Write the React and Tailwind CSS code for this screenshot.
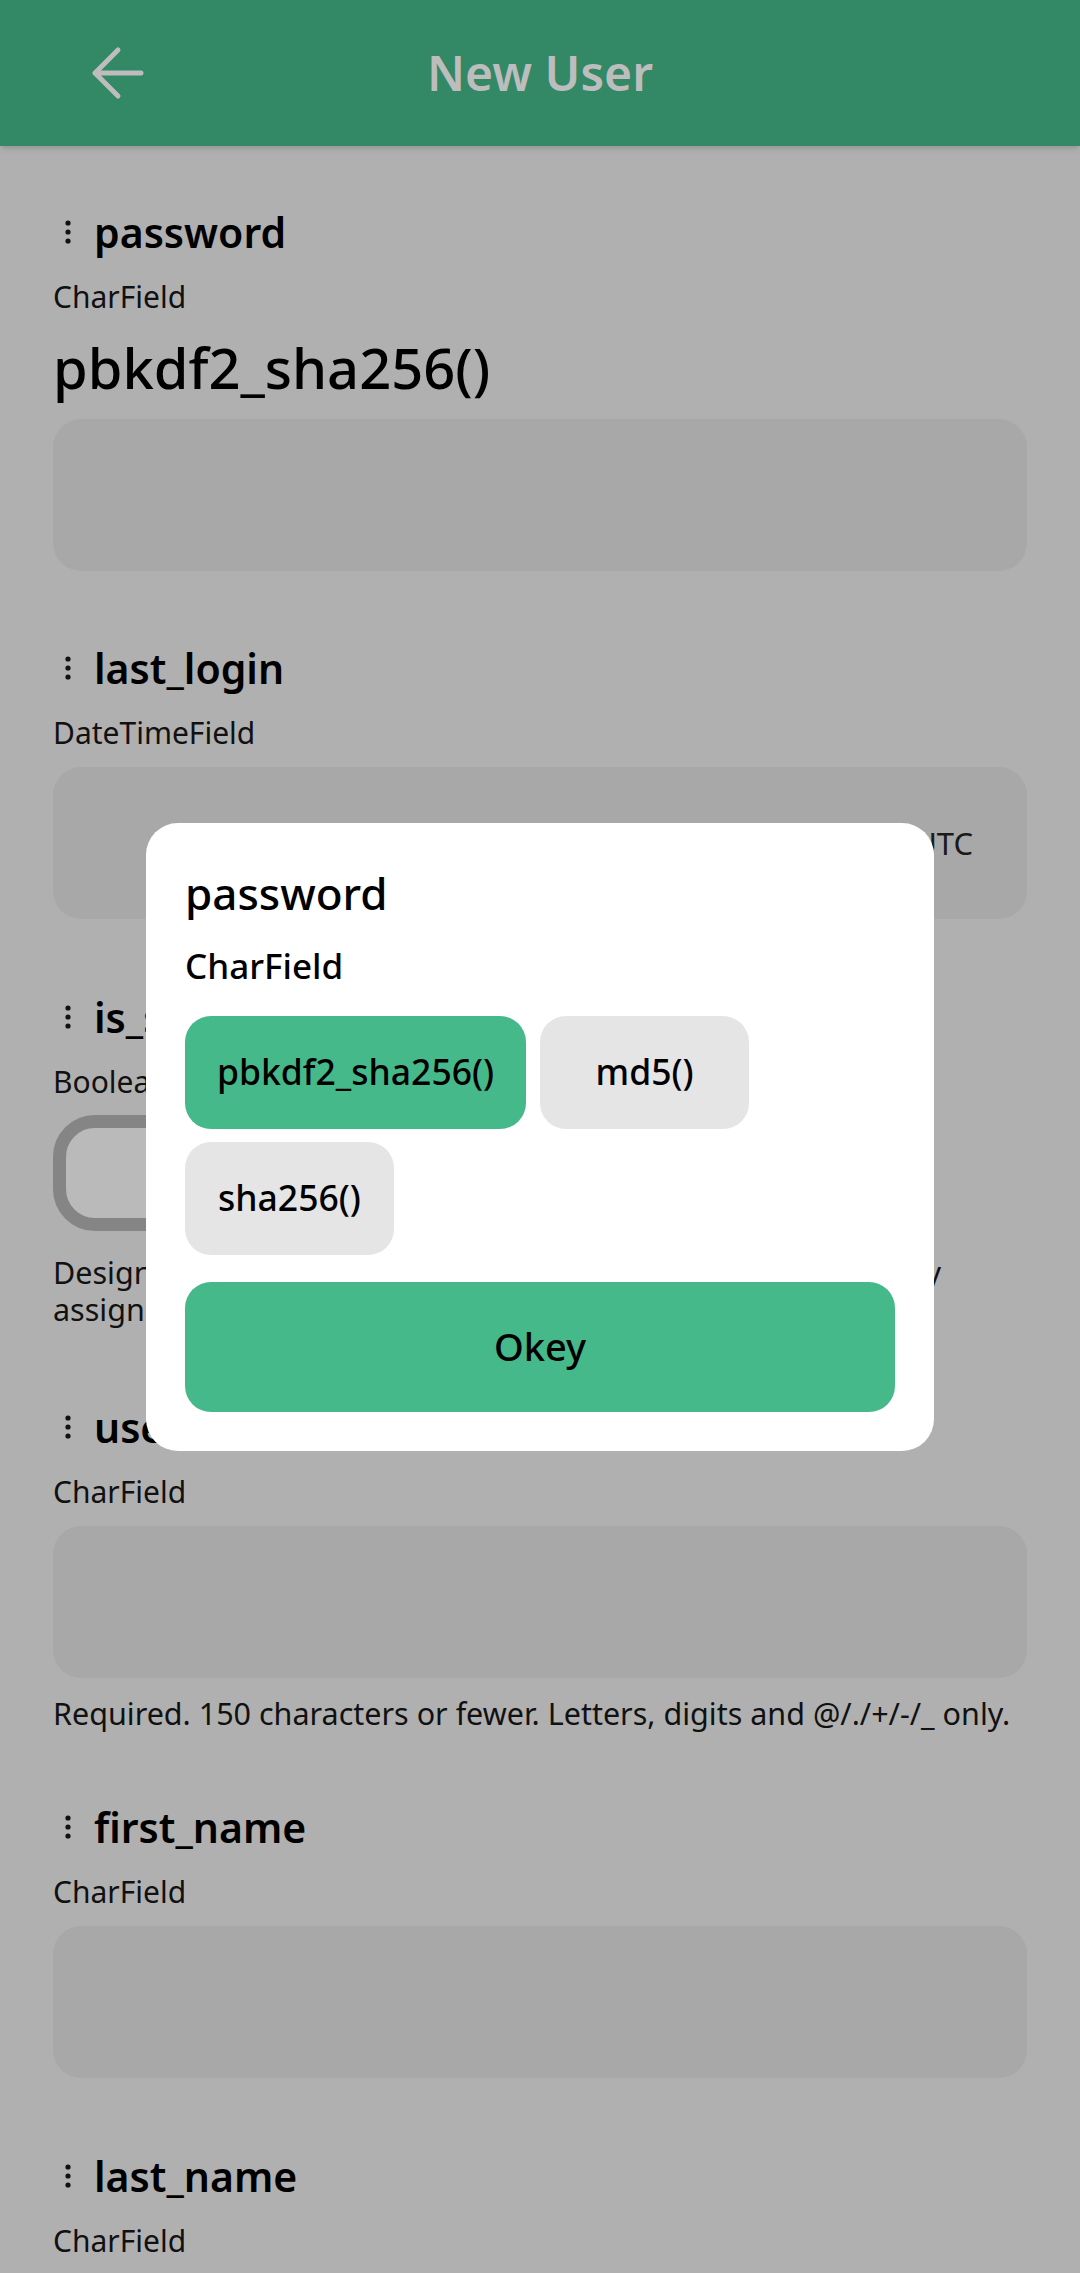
import React from "react";

// Fields shown on the "New User" form
const fields = [
  { name: "password", type: "CharField", value: "pbkdf2_sha256()", kind: "input", mb: "mb-[69px]" },
  { name: "last_login", type: "DateTimeField", kind: "input", inputText: "UTC", mb: "mb-[70px]" },
  {
    name: "is_superuser",
    type: "BooleanField",
    kind: "switch",
    help: ["Designates that this user has all permissions without explicitly", "assigning them."],
    mb: "mb-[71px]",
  },
  {
    name: "username",
    type: "CharField",
    kind: "input",
    help: ["Required. 150 characters or fewer. Letters, digits and @/./+/-/_ only."],
    mb: "mb-[67px]",
  },
  { name: "first_name", type: "CharField", kind: "input", mb: "mb-[70px]" },
  { name: "last_name", type: "CharField", kind: "input", mb: "mb-[70px]" },
];

const hashers = ["pbkdf2_sha256()", "md5()", "sha256()"];

const DragDots = () => (
  <svg width="30" height="24" viewBox="0 0 30 24" className="shrink-0">
    <circle cx="15" cy="3" r="2.6" fill="#111" />
    <circle cx="15" cy="12" r="2.6" fill="#111" />
    <circle cx="15" cy="21" r="2.6" fill="#111" />
  </svg>
);

const Field = ({ field }) => {
  const isSwitch = field.kind === "switch";
  return (
    <section className={field.mb}>
      <div className="flex items-center h-[56px]">
        <DragDots />
        <span className="ml-[11px] text-[41px] leading-[56px] font-semibold text-black">
          {field.name}
        </span>
      </div>
      <div className="mt-[17px] text-[30px] leading-[40px] text-[#111]">{field.type}</div>

      {field.value && (
        <div className="mt-[18px] text-[56px] leading-[64px] font-medium text-black">
          {field.value}
        </div>
      )}

      {field.kind === "input" && (
        <div
          className={`${field.value ? "mt-[20px]" : "mt-[14px]"} h-[152px] rounded-[28px] bg-[#a8a8a8] flex items-center justify-end pr-[54px] text-[31px] text-[#1a1a1a]`}
        >
          {field.inputText}
        </div>
      )}

      {isSwitch && (
        <div className="mt-[13px] w-[190px] h-[116px] rounded-[42px] border-[13px] border-[#858585] bg-[#bababa]" />
      )}

      {field.help && (
        <div
          className={`${isSwitch ? "mt-[23px] leading-[37px]" : "mt-[16px] leading-[38px]"} text-[30.5px] text-[#111] whitespace-nowrap`}
        >
          {field.help.map((line) => (
            <div key={line}>{line}</div>
          ))}
        </div>
      )}
    </section>
  );
};

const App = () => {
  return (
    <div
      className="relative h-[2273px] w-[1080px] overflow-hidden bg-[#b0b0b0]"
      style={{ fontFamily: '"Noto Sans", "Open Sans", sans-serif' }}
    >
      {/* Top bar */}
      <header className="relative z-10 h-[146px] bg-[#338866] flex items-center shadow-md">
        <div className="w-[180px] pl-[90px] flex items-center">
          <svg width="54" height="54" viewBox="0 0 54 54" fill="none">
            <path
              d="M51 27H5M28 4L5 27L28 50"
              stroke="#bdbdbd"
              strokeWidth="5"
              strokeLinecap="round"
              strokeLinejoin="round"
            />
          </svg>
        </div>
        <h1 className="flex-1 text-center text-[48px] font-semibold text-[#bdbdbd] leading-none">
          New User
        </h1>
        <div className="w-[180px]" />
      </header>

      {/* Form */}
      <main className="px-[53px] pt-[58px]">
        {fields.map((f) => (
          <Field key={f.name} field={f} />
        ))}
      </main>

      {/* Hasher picker dialog */}
      <div className="absolute inset-0 z-20 flex items-center justify-center">
        <div className="w-[788px] bg-white rounded-[32px] px-[39px] pt-[40px] pb-[39px]">
          <div className="text-[44px] leading-[60px] font-medium text-black">password</div>
          <div className="mt-[20px] text-[35px] leading-[46px] font-medium text-black">CharField</div>
          <div className="mt-[27px] flex flex-wrap gap-x-[14px] gap-y-[13px]">
            {hashers.map((h, i) => (
              <button
                key={h}
                className={`h-[113px] min-w-[209px] px-[32px] rounded-[26px] text-[35.5px] font-medium text-black ${
                  i === 0 ? "bg-[#46b98b]" : "bg-[#e5e5e5]"
                }`}
              >
                {h}
              </button>
            ))}
          </div>
          <button className="mt-[27px] w-full h-[130px] rounded-[26px] bg-[#46b98b] text-[38px] font-medium text-black">
            Okey
          </button>
        </div>
      </div>
    </div>
  );
};

export default App;
